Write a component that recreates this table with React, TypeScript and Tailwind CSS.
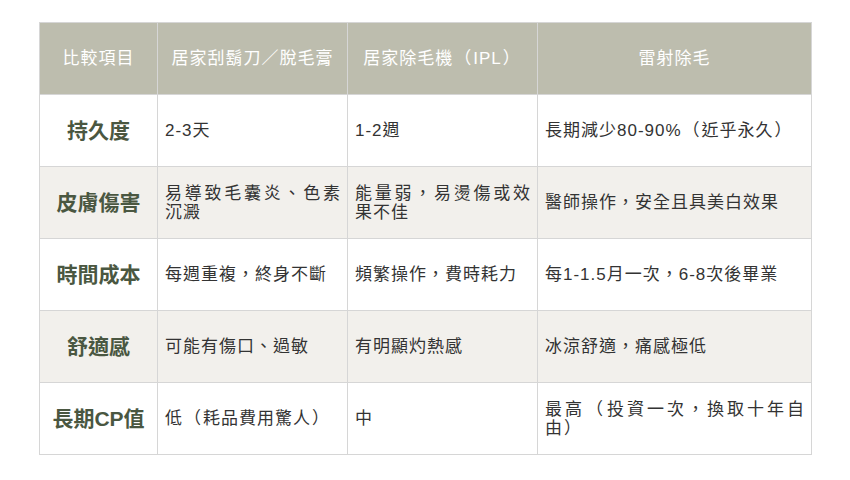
const headers = ["比較項目", "居家刮鬍刀／脫毛膏", "居家除毛機（IPL）", "雷射除毛"];

const rows: [string, string, string, string][] = [
  ["持久度", "2-3天", "1-2週", "長期減少80-90%（近乎永久）"],
  ["皮膚傷害", "易導致毛囊炎、色素沉澱", "能量弱，易燙傷或效果不佳", "醫師操作，安全且具美白效果"],
  ["時間成本", "每週重複，終身不斷", "頻繁操作，費時耗力", "每1-1.5月一次，6-8次後畢業"],
  ["舒適感", "可能有傷口、過敏", "有明顯灼熱感", "冰涼舒適，痛感極低"],
  ["長期CP值", "低（耗品費用驚人）", "中", "最高（投資一次，換取十年自由）"],
];

// the browser trims fullwidth parens to half width; a padded span keeps the full em
function withParens(text: string) {
  return text.split(/([（）])/).map((part, i) =>
    part === "（" || part === "）" ? (
      <span key={i} className="px-px">
        {part}
      </span>
    ) : (
      part
    )
  );
}

export default function App() {
  return (
    <div
      lang="zh-Hant"
      className="w-[850px] h-[480px] bg-white pt-[22px] pl-[39px]"
      style={{ fontFamily: '"Liberation Sans", "Noto Sans CJK TC", sans-serif' }}
    >
      <table className="table-fixed border-collapse w-[772px]">
        <colgroup>
          <col className="w-[118px]" />
          <col className="w-[190px]" />
          <col className="w-[190px]" />
          <col className="w-[274px]" />
        </colgroup>
        <thead>
          <tr className="h-[72px] bg-[#bdbdae]">
            {headers.map((h) => (
              <th
                key={h}
                className="border border-[#d6d6d6] text-center align-middle text-[17px] tracking-[1px] font-normal text-white px-[7px]"
              >
                {withParens(h)}
              </th>
            ))}
          </tr>
        </thead>
        <tbody>
          {rows.map((r, i) => (
            <tr key={r[0]} className={`h-[72px] ${i % 2 === 1 ? "bg-[#f2f0ec]" : "bg-white"}`}>
              <td className="border border-[#d6d6d6] text-center align-middle text-[21px] font-bold text-[#4a5741] px-[4px]">
                {r[0]}
              </td>
              {r.slice(1).map((c, j) => (
                <td
                  key={j}
                  className="border border-[#d6d6d6] align-middle text-justify text-[17px] tracking-[1px] leading-[19px] text-[#333] pl-[7px] pr-[6px]"
                >
                  {withParens(c)}
                </td>
              ))}
            </tr>
          ))}
        </tbody>
      </table>
    </div>
  );
}
